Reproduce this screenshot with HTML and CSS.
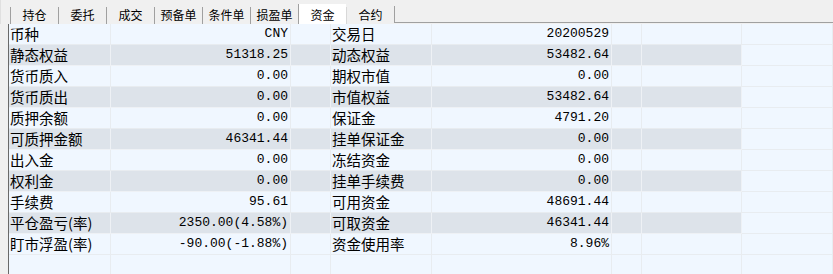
FILE: index.html
```html
<!DOCTYPE html>
<html lang="zh-CN">
<head>
  <meta charset="UTF-8" />
  <title>资金</title>
  <link rel="stylesheet" href="styles.css">
</head>
<body>

  <div class="tabs">
    <div class="tab">持仓</div>
    <div class="tab">委托</div>
    <div class="tab">成交</div>
    <div class="tab">预备单</div>
    <div class="tab">条件单</div>
    <div class="tab">损盈单</div>
    <div class="tab active">资金</div>
    <div class="tab">合约</div>
    <div class="tab-fill"></div>
  </div>

  <div class="grid">
    <div class="row">
      <div class="label">币种</div><div class="num">CNY</div><div></div>
      <div class="label">交易日</div><div class="num">20200529</div><div></div><div></div><div class="blank"></div>
    </div>
    <div class="row alt">
      <div class="label">静态权益</div><div class="num">51318.25</div><div></div>
      <div class="label">动态权益</div><div class="num">53482.64</div><div></div><div></div><div class="blank"></div>
    </div>
    <div class="row">
      <div class="label">货币质入</div><div class="num">0.00</div><div></div>
      <div class="label">期权市值</div><div class="num">0.00</div><div></div><div></div><div class="blank"></div>
    </div>
    <div class="row alt">
      <div class="label">货币质出</div><div class="num">0.00</div><div></div>
      <div class="label">市值权益</div><div class="num">53482.64</div><div></div><div></div><div class="blank"></div>
    </div>
    <div class="row">
      <div class="label">质押余额</div><div class="num">0.00</div><div></div>
      <div class="label">保证金</div><div class="num">4791.20</div><div></div><div></div><div class="blank"></div>
    </div>
    <div class="row alt">
      <div class="label">可质押金额</div><div class="num">46341.44</div><div></div>
      <div class="label">挂单保证金</div><div class="num">0.00</div><div></div><div></div><div class="blank"></div>
    </div>
    <div class="row">
      <div class="label">出入金</div><div class="num">0.00</div><div></div>
      <div class="label">冻结资金</div><div class="num">0.00</div><div></div><div></div><div class="blank"></div>
    </div>
    <div class="row alt">
      <div class="label">权利金</div><div class="num">0.00</div><div></div>
      <div class="label">挂单手续费</div><div class="num">0.00</div><div></div><div></div><div class="blank"></div>
    </div>
    <div class="row">
      <div class="label">手续费</div><div class="num">95.61</div><div></div>
      <div class="label">可用资金</div><div class="num">48691.44</div><div></div><div></div><div class="blank"></div>
    </div>
    <div class="row alt">
      <div class="label">平仓盈亏(率)</div><div class="num">2350.00(4.58%)</div><div></div>
      <div class="label">可取资金</div><div class="num">46341.44</div><div></div><div></div><div class="blank"></div>
    </div>
    <div class="row">
      <div class="label">盯市浮盈(率)</div><div class="num">-90.00(-1.88%)</div><div></div>
      <div class="label">资金使用率</div><div class="num">8.96%</div><div></div><div></div><div class="blank"></div>
    </div>
    <div class="row">
      <div></div><div></div><div></div><div></div><div></div><div></div><div></div><div class="blank"></div>
    </div>
  </div>

</body>
</html>
```

FILE: styles.css
```css
body {
  margin: 0;
  background: #f0f0f0;
  color: #000;
  font-family: "Noto Sans CJK SC", "DejaVu Sans", sans-serif;
  overflow: hidden;
}

.tabs {
  display: flex;
  align-items: flex-end;
  height: 24px;
  padding-left: 9px;
  border-left: 1px solid #e0e0e0;
  box-sizing: border-box;
}

.tab {
  width: 47px;
  height: 17px;
  border-left: 1px solid #a0a0a0;
  font-size: 12px;
  line-height: 16px;
  text-align: center;
}

.tab.active {
  height: 20px;
  line-height: 21px;
  background: #fff;
}

.tab.active + .tab {
  border-left-color: #d8d8d8;
}

.tab-fill {
  flex: 1;
  height: 16px;
  margin-bottom: 1px;
  border-left: 1px solid #a0a0a0;
  border-bottom: 1px solid #a0a0a0;
}

.grid {
  margin-left: 8px;
  border-left: 1px solid #696969;
  background: #f0f7ff;
}

.row {
  display: grid;
  grid-template-columns: 102px 180px 40px 101px 180px 30px 100px 1fr;
  height: 21px;
}

.row > div {
  border-right: 1px solid #e8ecf0;
  border-bottom: 1px solid #e8ecf0;
  line-height: 20px;
  white-space: nowrap;
  overflow: hidden;
}

.row.alt > div {
  background: #dde3ea;
  border-color: #eef1f5;
}

.row.alt > div.blank {
  background: #f0f7ff;
  border-color: #e8ecf0;
}

.label {
  font-size: 14.5px;
  padding-left: 1px;
}

.num {
  font-family: "Liberation Mono", "DejaVu Sans Mono", monospace;
  font-size: 13px;
  text-align: right;
  padding-right: 2px;
}
```
